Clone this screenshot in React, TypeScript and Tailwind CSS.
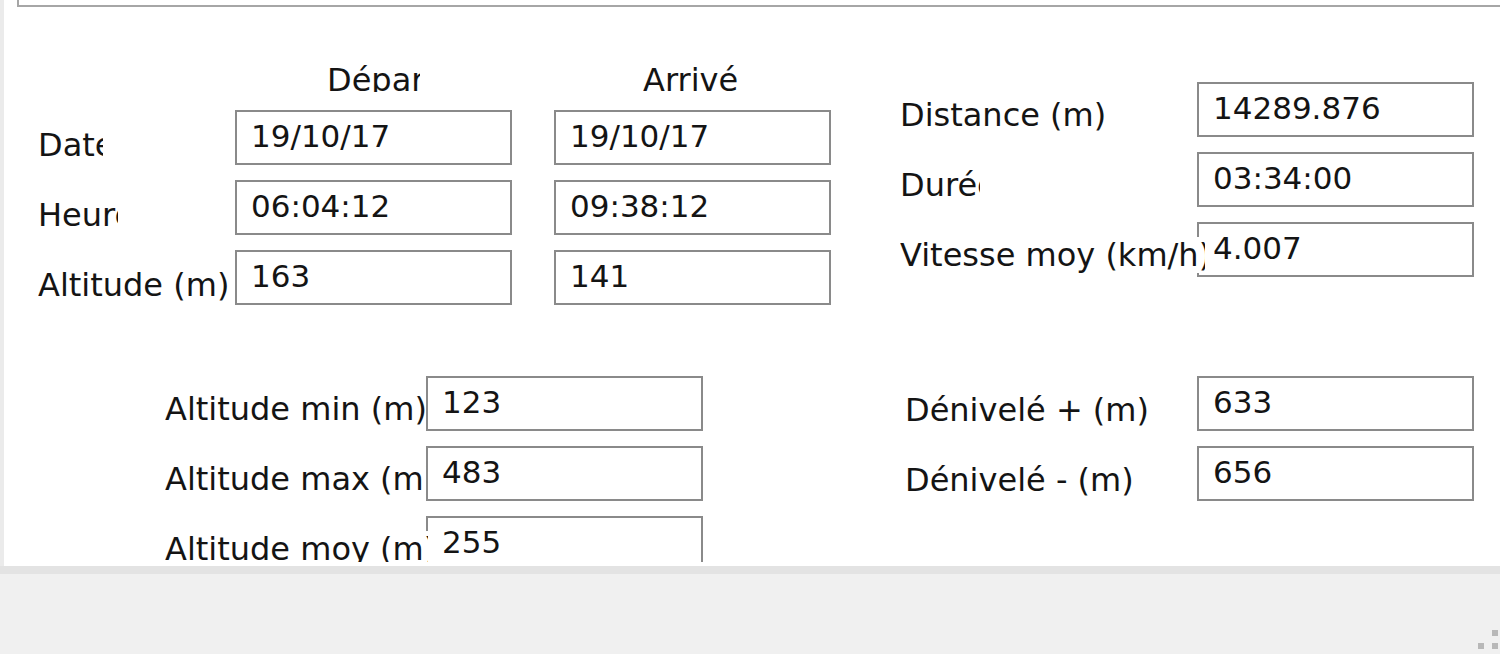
type Row = { label: string; clip: number; values: string[]; over?: boolean };

const topRows: Row[] = [
  { label: "Date", clip: 65, values: ["19/10/17", "19/10/17"] },
  { label: "Heure", clip: 80, values: ["06:04:12", "09:38:12"] },
  { label: "Altitude (m)", clip: 197, values: ["163", "141"] },
];

const rightRows: Row[] = [
  { label: "Distance (m)", clip: 297, values: ["14289.876"] },
  { label: "Durée", clip: 80, values: ["03:34:00"] },
  { label: "Vitesse moy (km/h)", clip: 305, values: ["4.007"], over: true },
];

const altRows: Row[] = [
  { label: "Altitude min (m)", clip: 261, values: ["123"] },
  { label: "Altitude max (m)", clip: 261, values: ["483"] },
  { label: "Altitude moy (m)", clip: 263, values: ["255"], over: true },
];

const denivRows: Row[] = [
  { label: "Dénivelé + (m)", clip: 292, values: ["633"] },
  { label: "Dénivelé - (m)", clip: 292, values: ["656"] },
];

function Field({ value, className = "" }: { value: string; className?: string }) {
  return (
    <div className={`h-[55px] w-[277px] shrink-0 border-2 border-[#8a8a8a] bg-white pl-[14px] pt-[6px] text-[31px] whitespace-nowrap ${className}`}>
      {value}
    </div>
  );
}

function Label({ row, width, pt }: { row: Row; width: string; pt: string }) {
  return (
    <div className={`${width} shrink-0 ${pt}`}>
      <div
        className={`overflow-hidden whitespace-nowrap h-[36px] ${row.over ? "relative z-10 bg-white" : ""}`}
        style={{ width: row.clip }}
      >
        {row.label}
      </div>
    </div>
  );
}

export default function App() {
  return (
    <div className="w-[1500px] h-[654px] bg-[#f0f0f0] font-['DejaVu_Sans',sans-serif] text-[32px] leading-[36px] text-[#141414] flex flex-col overflow-hidden">
      <div className="h-[566px] shrink-0 bg-white border-l-4 border-[#ebebeb]">
        <div className="h-[562px] overflow-hidden">
          {/* bottom edge of the group box above */}
          <div className="ml-[13px] h-[7px] border-l-2 border-b-2 border-[#a6a6a6]" />

          <div className="flex items-start">
            {/* départ / arrivée */}
            <div className="ml-[34px] w-[793px] mt-[55px]">
              <div className="flex h-[48px]">
                <div className="ml-[289px] w-[93px] h-[30px] overflow-hidden whitespace-nowrap">Départ</div>
                <div className="ml-[223px] w-[96px] h-[30px] overflow-hidden whitespace-nowrap">Arrivée</div>
              </div>
              <div className="flex flex-col gap-[15px]">
                {topRows.map((r) => (
                  <div key={r.label} className="flex h-[55px]">
                    <Label row={r} width="w-[197px]" pt="pt-[17px]" />
                    <Field value={r.values[0]} />
                    <Field value={r.values[1]} className="ml-[42px]" />
                  </div>
                ))}
              </div>
            </div>

            {/* distance / durée / vitesse */}
            <div className="ml-[69px] mt-[75px] flex flex-col gap-[15px]">
              {rightRows.map((r) => (
                <div key={r.label} className="flex h-[55px]">
                  <Label row={r} width="w-[297px]" pt="pt-[15px]" />
                  <Field value={r.values[0]} />
                </div>
              ))}
            </div>
          </div>

          <div className="flex items-start mt-[71px]">
            <div className="ml-[161px] flex flex-col gap-[15px]">
              {altRows.map((r) => (
                <div key={r.label} className="flex h-[55px]">
                  <Label row={r} width="w-[261px]" pt="pt-[15px]" />
                  <Field value={r.values[0]} />
                </div>
              ))}
            </div>
            <div className="ml-[202px] flex flex-col gap-[15px]">
              {denivRows.map((r) => (
                <div key={r.label} className="flex h-[55px]">
                  <Label row={r} width="w-[292px]" pt="pt-[16px]" />
                  <Field value={r.values[0]} />
                </div>
              ))}
            </div>
          </div>
        </div>
      </div>

      <div className="h-[8px] shrink-0 bg-[#e3e3e3]" />

      <div className="flex-1 flex justify-end items-end pr-[2px] pb-[5px]">
        <svg width="20" height="19" viewBox="0 0 20 19">
          <rect x="14" y="0" width="6" height="6" fill="#b8b8b8" />
          <rect x="0" y="13" width="6" height="6" fill="#b8b8b8" />
          <rect x="14" y="13" width="6" height="6" fill="#b8b8b8" />
        </svg>
      </div>
    </div>
  );
}
